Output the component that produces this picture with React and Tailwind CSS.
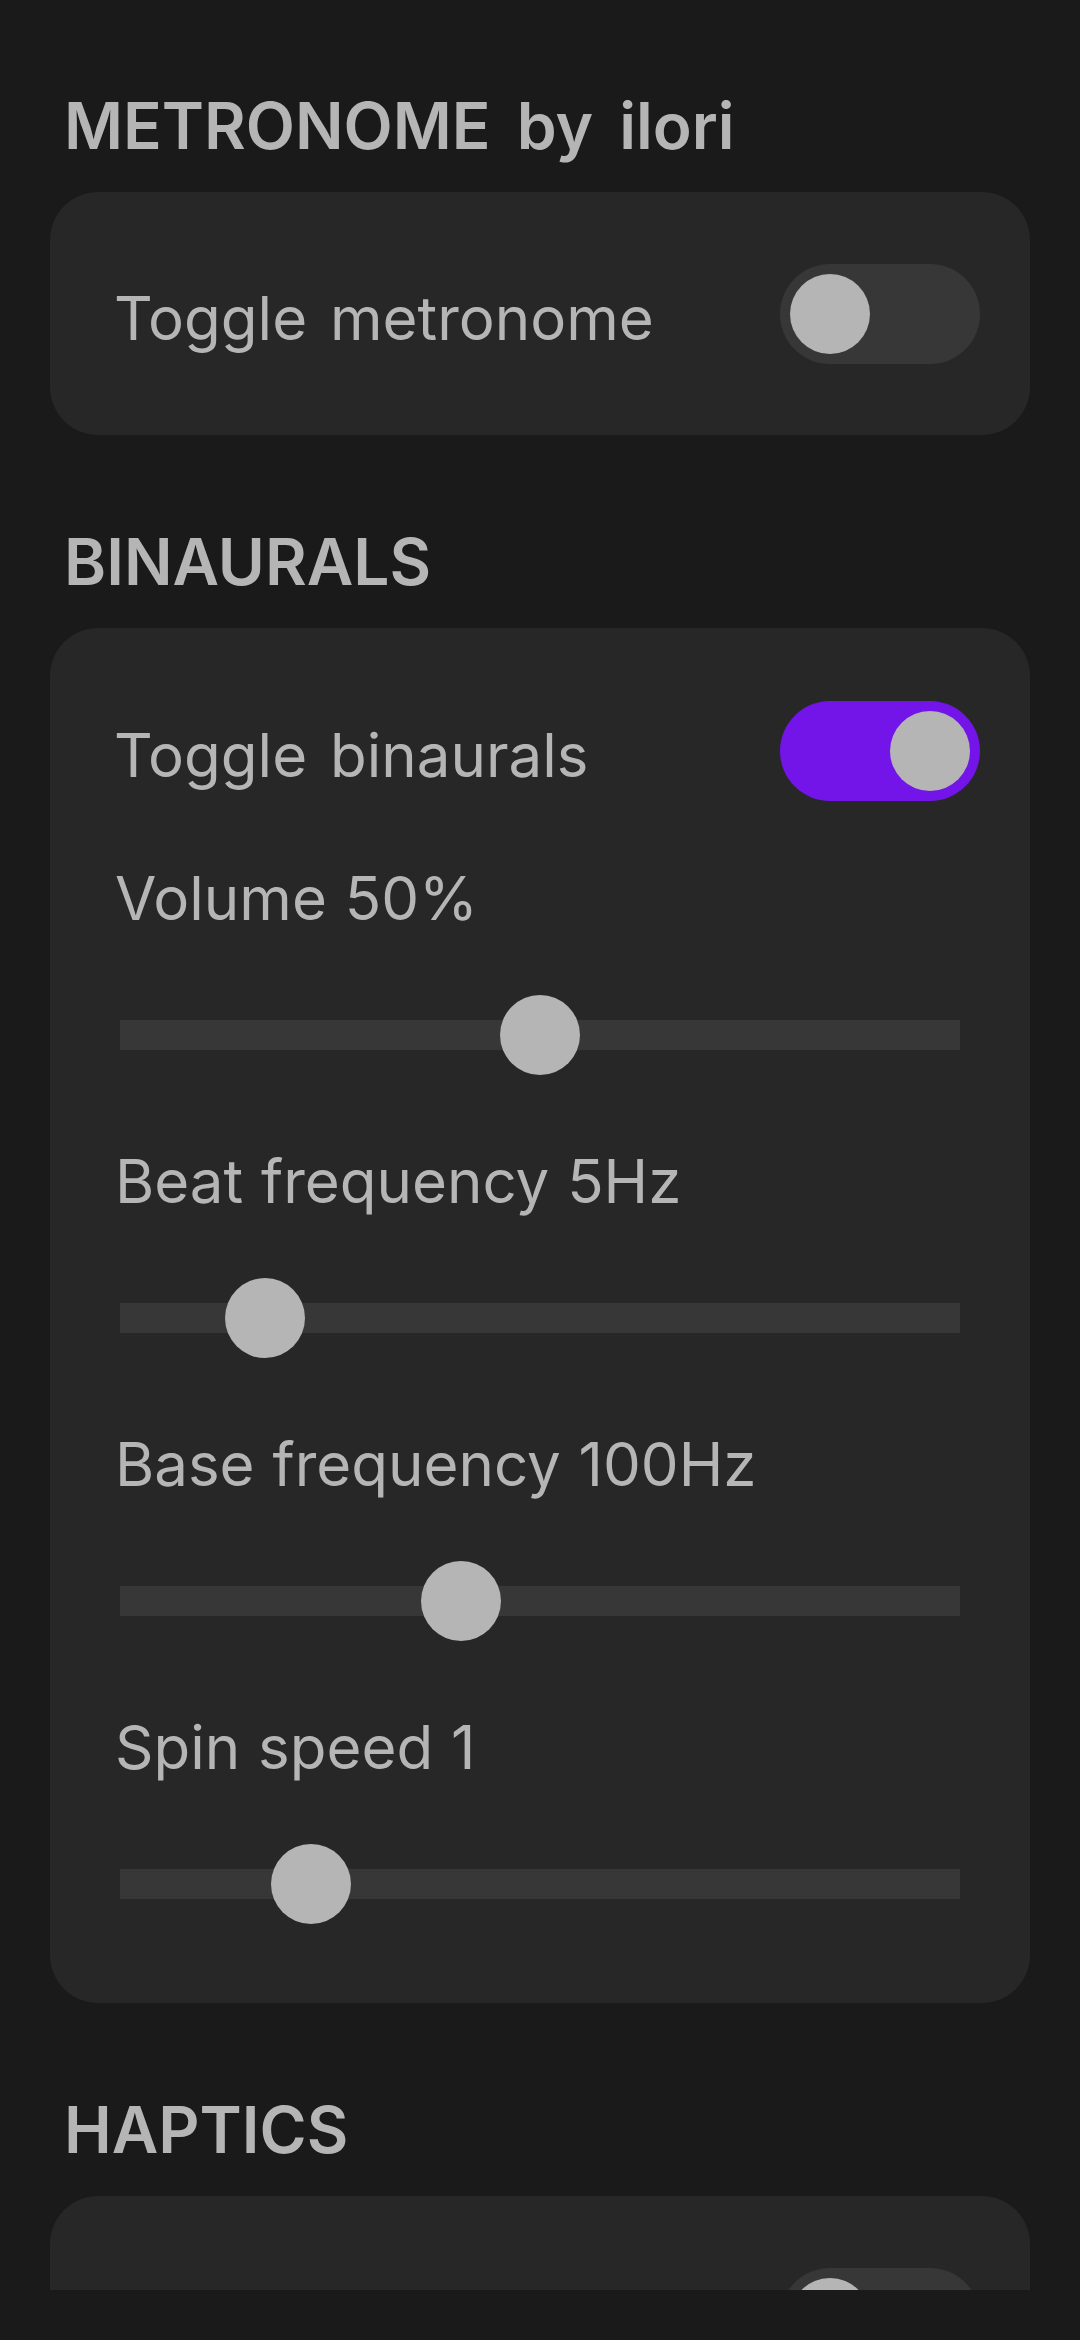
import { useState } from 'react';

const Toggle = ({ on, onChange }) => (
  <button
    onClick={() => onChange(!on)}
    className={`flex h-[100px] w-[200px] shrink-0 items-center rounded-full p-[10px] ${
      on ? 'justify-end bg-[#7314e8]' : 'justify-start bg-[#373737]'
    }`}
  >
    <span className="block h-[80px] w-[80px] rounded-full bg-[#b5b5b5]" />
  </button>
);

const Slider = ({ label, value, last }) => (
  <div className={last ? '' : 'mb-[70px]'}>
    <p className="pl-[15px] text-[60px] leading-[72px] [word-spacing:1px]">{label}</p>
    <div className="relative mx-[20px] mt-[61px] flex h-[80px] items-center">
      <div className="h-[30px] w-full bg-[#373737]" />
      <span
        className="absolute top-0 h-[80px] w-[80px] -translate-x-1/2 rounded-full bg-[#b5b5b5]"
        style={{ left: `${value * 100}%` }}
      />
    </div>
  </div>
);

const ToggleRow = ({ label, on, onChange }) => (
  <div className="flex items-center justify-between">
    <p className="pl-[14px] pt-[8px] text-[60px] leading-[72px] [word-spacing:6px]">{label}</p>
    <Toggle on={on} onChange={onChange} />
  </div>
);

const Heading = ({ children, first }) => (
  <h2
    className={`mb-[27px] pl-[14px] text-[64px] font-semibold leading-[78px] [word-spacing:10px] ${
      first ? '' : 'mt-[88px]'
    }`}
  >
    {children}
  </h2>
);

export default function App() {
  const [metronome, setMetronome] = useState(false);
  const [binaurals, setBinaurals] = useState(true);
  const [haptics, setHaptics] = useState(false);

  return (
    <div
      className="min-h-[2340px] w-[1080px] bg-[#1a1a1a] text-[#b5b5b5]"
      style={{ fontFamily: 'Inter, "Noto Sans", sans-serif' }}
    >
      <div className="h-[2290px] overflow-hidden px-[50px] pt-[87px]">
        <Heading first>METRONOME by ilori</Heading>
        <div className="rounded-[48px] bg-[#272727] px-[50px] pb-[71px] pt-[72px]">
          <ToggleRow label="Toggle metronome" on={metronome} onChange={setMetronome} />
        </div>

        <Heading>BINAURALS</Heading>
        <div className="rounded-[48px] bg-[#272727] px-[50px] pb-[79px] pt-[73px]">
          <ToggleRow label="Toggle binaurals" on={binaurals} onChange={setBinaurals} />
          <div className="mt-[61px]">
            <Slider label="Volume 50%" value={0.5} />
            <Slider label="Beat frequency 5Hz" value={0.173} />
            <Slider label="Base frequency 100Hz" value={0.406} />
            <Slider label="Spin speed 1" value={0.227} last />
          </div>
        </div>

        <Heading>HAPTICS</Heading>
        <div className="rounded-[48px] bg-[#272727] px-[50px] pb-[71px] pt-[72px]">
          <ToggleRow label="Toggle haptics" on={haptics} onChange={setHaptics} />
        </div>
      </div>
    </div>
  );
}
